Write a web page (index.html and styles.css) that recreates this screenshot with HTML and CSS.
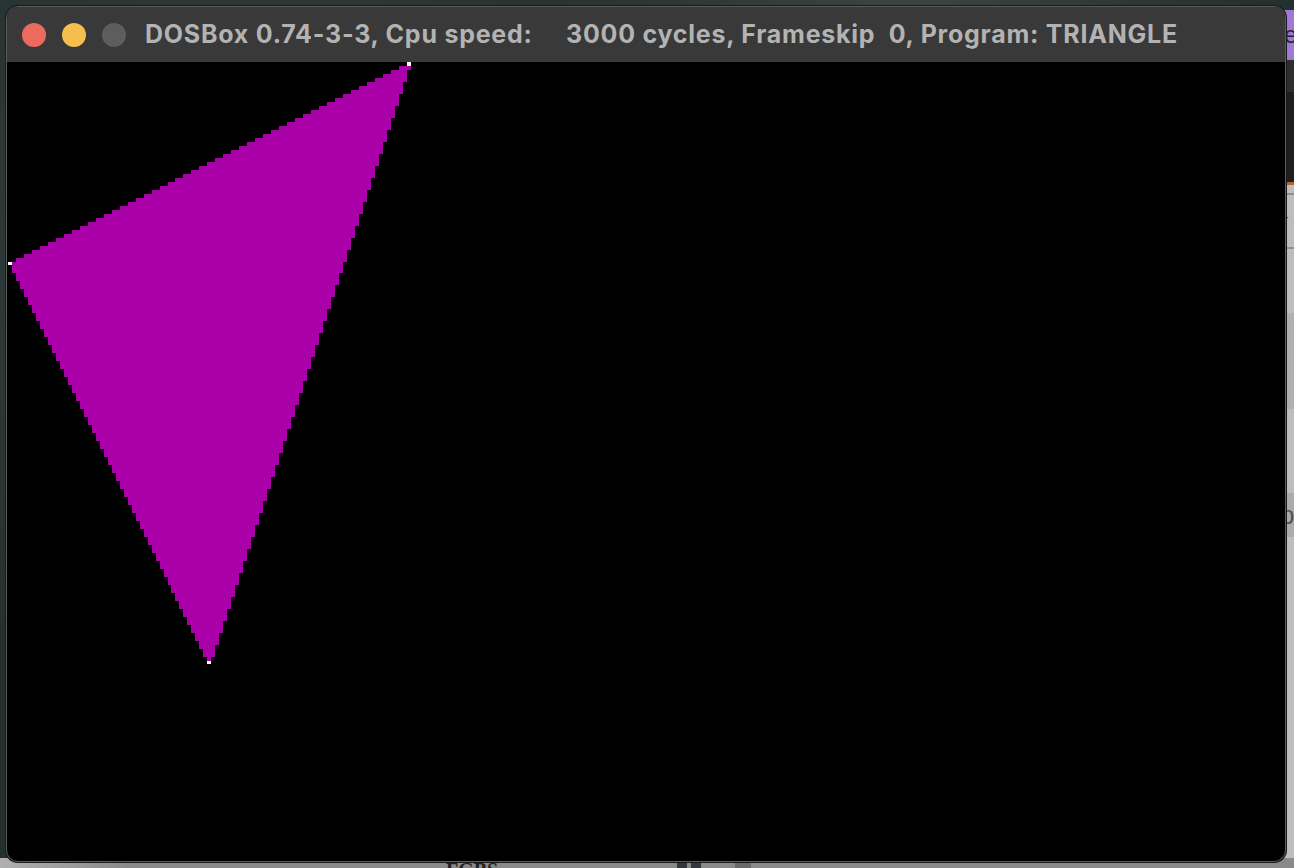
FILE: index.html
```html
<!DOCTYPE html>
<html>
<head>
<meta charset="utf-8">
<title>DOSBox</title>
<link rel="stylesheet" href="styles.css">
</head>
<body>
<div class="desktop">
  <div class="bg-app">
    <div class="bg-app-head"><span class="bg-letter">e</span></div>
    <div class="bg-app-bar"></div>
    <div class="bg-app-dark"></div>
    <div class="bg-app-accent"></div>
    <div class="bg-app-body">
      <div class="bg-line"></div>
      <div class="bg-dot">-</div>
      <div class="bg-line"></div>
      <div class="bg-band"></div>
      <div class="bg-char">3</div>
      <div class="bg-band2"><span>pi</span></div>
    </div>
  </div>
  <div class="bg-bottom">
    <span class="bg-bottom-text">FGBS</span>
    <span class="bg-bottom-mark mark1"></span>
    <span class="bg-bottom-mark mark2"></span>
    <span class="bg-bottom-mark mark3"></span>
  </div>

  <div class="window">
    <div class="titlebar">
      <span class="light red"></span>
      <span class="light yellow"></span>
      <span class="light gray"></span>
      <span class="title">DOSBox 0.74-3-3, Cpu speed:     3000 cycles, Frameskip  0, Program: TRIANGLE</span>
    </div>
    <div class="screen">
      <canvas id="dos" class="dos" width="320" height="200"></canvas>
    </div>
  </div>
</div>
<script src="script.js"></script>
</body>
</html>
```
FILE: styles.css
```css
html, body {
  margin: 0;
  padding: 0;
}
body {
  width: 1294px;
  height: 868px;
  overflow: hidden;
  background: #253030;
}
.desktop {
  position: relative;
  width: 1294px;
  height: 868px;
  background:
    radial-gradient(circle at 20% 30%, #34413f 0, transparent 40%),
    radial-gradient(circle at 70% 2%, #3a4644 0, transparent 30%),
    #243030;
}
.bg-app {
  position: absolute;
  left: 1280px;
  top: 10px;
  width: 40px;
  height: 858px;
  background: #c4c4c4;
  display: flex;
  flex-direction: column;
}
.bg-app-head {
  height: 50px;
  background: #9f78d8;
  display: flex;
  align-items: center;
  padding-left: 4px;
}
.bg-letter {
  font-family: "Liberation Sans", sans-serif;
  font-size: 24px;
  color: #222;
}
.bg-app-bar {
  height: 32px;
  background: #2e2e2e;
}
.bg-app-dark {
  height: 90px;
  background: #1e1e1e;
}
.bg-app-accent {
  height: 3px;
  background: #b4652c;
}
.bg-app-body {
  flex: 1;
  background: #bdbdbd;
  display: flex;
  flex-direction: column;
}
.bg-line {
  height: 2px;
  background: #8e8e8e;
  margin-top: 8px;
}
.bg-dot {
  height: 44px;
  color: #555;
  font-family: "Liberation Sans", sans-serif;
  font-size: 14px;
  padding-left: 4px;
  line-height: 44px;
}
.bg-band {
  height: 96px;
  margin-top: 64px;
  background: #b0b0b0;
}
.bg-char {
  font-family: "Liberation Sans", sans-serif;
  font-weight: bold;
  font-size: 28px;
  color: #111;
  height: 84px;
  line-height: 84px;
  margin-left: -10px;
}
.bg-band2 {
  height: 44px;
  background: #ababab;
  font-family: "Liberation Sans", sans-serif;
  font-size: 26px;
  color: #555;
  line-height: 44px;
}
.bg-bottom {
  position: absolute;
  left: 0;
  right: 0;
  bottom: 0;
  height: 10px;
  overflow: hidden;
  background: linear-gradient(90deg, #b0b0b0, #8a8a8a 10%, #8a8a8a);
}
.bg-bottom-text {
  position: absolute;
  left: 446px;
  top: 2px;
  font-family: "Liberation Serif", serif;
  font-weight: bold;
  font-size: 20px;
  line-height: 20px;
  color: #222;
}
.bg-bottom-mark {
  position: absolute;
  bottom: 0;
  height: 6px;
  background: #33363a;
}
.mark1 { left: 677px; width: 10px; }
.mark2 { left: 691px; width: 10px; }
.mark3 { left: 735px; width: 16px; background: #6a6a6a; }
.window {
  position: absolute;
  left: 6px;
  top: 6px;
  width: 1278px;
  height: 854px;
  border: 1px solid #5c5c5c;
  border-radius: 12px;
  background: #000;
  overflow: hidden;
  display: flex;
  flex-direction: column;
  box-shadow: 0 0 0 1px #1a1a1a;
}
.titlebar {
  height: 55px;
  flex: 0 0 55px;
  background: #393939;
  display: flex;
  align-items: center;
  padding-left: 15px;
  gap: 16px;
  box-sizing: border-box;
}
.light {
  width: 24px;
  height: 24px;
  border-radius: 50%;
  flex: 0 0 24px;
}
.red { background: #ed6a5e; }
.yellow { background: #f5be4f; }
.gray { background: #5d5d5d; }
.title {
  margin-left: 3px;
  margin-top: -2px;
  white-space: pre;
  font-family: Inter, "Liberation Sans", sans-serif;
  font-weight: 700;
  font-size: 25px;
  color: #b3b3b3;
  letter-spacing: 0.76px;
}
.screen {
  flex: 1;
  margin: 0 1px 1px 1px;
  background: #000;
  border-radius: 0 0 10px 10px;
  overflow: hidden;
}
.dos {
  display: block;
  width: 1276px;
  height: 798px;
  image-rendering: pixelated;
}
```
FILE: script.js
```js
(function () {
  var c = document.getElementById('dos');
  var g = c.getContext('2d');
  g.fillStyle = '#000';
  g.fillRect(0, 0, 320, 200);
  g.fillStyle = '#aa00aa';
  for (var y = 0; y <= 150; y++) {
    var xl = y <= 50 ? 100 - 2 * y : (y - 50) / 2;
    var xr = 100 - y / 3;
    var a = Math.round(xl);
    var b = Math.round(xr);
    if (b >= a) g.fillRect(a, y, b - a + 1, 1);
  }
  g.fillStyle = '#ffffff';
  g.fillRect(0, 50, 1, 1);
  g.fillRect(100, 0, 1, 1);
  g.fillRect(50, 150, 1, 1);
})();
```
